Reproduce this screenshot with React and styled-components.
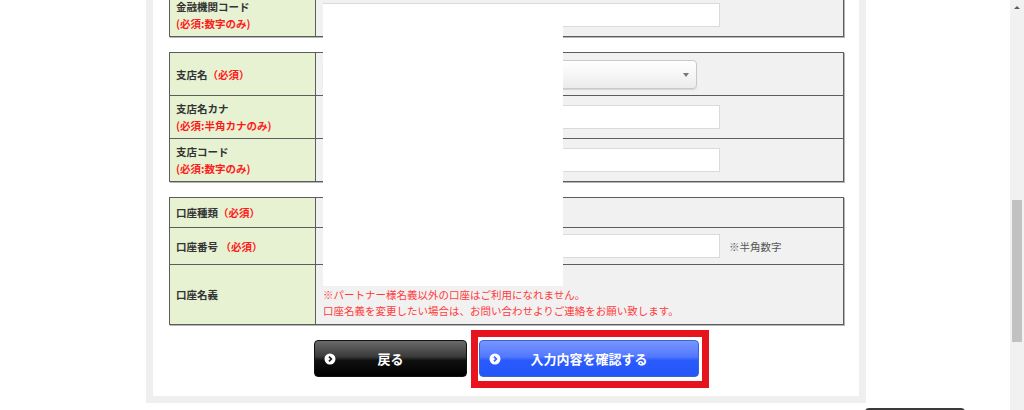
import React from "react";
import styled, { createGlobalStyle } from "styled-components";

const GlobalStyle = createGlobalStyle`
  html, body {
    margin: 0;
    padding: 0;
    background: #fff;
  }
  body {
    font-family: "Noto Sans CJK JP", "Noto Sans", sans-serif;
    color: #333;
  }
`;

const Page = styled.div`
  position: relative;
  display: flex;
  height: 410px;
  overflow: hidden;
`;

const Main = styled.div`
  flex: 1;
  min-width: 0;
`;

const Frame = styled.div`
  width: 720px;
  box-sizing: border-box;
  margin: -14px 0 0 146px;
  border: 7px solid #efefef;
  padding: 0 15px 19px 16px;
  background: #fff;
`;

const Table = styled.table`
  width: 100%;
  border-collapse: collapse;
  border: 1px solid #5c5c5c;
  box-shadow: 1px 1px 0 #b5b5b5;
  margin-top: ${(p) => (p.$first ? "0" : "15px")};
`;

const Row = styled.tr`
  height: ${(p) => p.$h}px;
`;

const Label = styled.th`
  width: 146px;
  box-sizing: border-box;
  padding: 0 6px;
  background: #e7f2d3;
  border: 1px solid #5c5c5c;
  text-align: left;
  vertical-align: middle;
  font-size: 10.5px;
  font-weight: bold;
  line-height: 17px;
  color: #333;
`;

const Req = styled.span`
  color: #ff1a1a;
  font-weight: bold;
`;

const ReqLine = styled.div`
  color: #ff1a1a;
`;

const Value = styled.td`
  padding: 0 7px;
  background: #f1f1f1;
  border: 1px solid #5c5c5c;
  vertical-align: middle;
  font-size: 10.5px;
`;

const Field = styled.div`
  display: flex;
  align-items: center;
  gap: 9px;
`;

const TextInput = styled.input`
  width: 397px;
  height: 24px;
  box-sizing: border-box;
  border: 1px solid #dadada;
  background: #fff;
  padding: 0 4px;
  font-size: 11px;
`;

const SelectBox = styled.div`
  position: relative;
  width: 374px;
  height: 29px;
  box-sizing: border-box;
  border: 1px solid #c9c9c9;
  border-radius: 4px;
  background: linear-gradient(#ffffff 0%, #f7f7f7 45%, #ebebeb 100%);
  box-shadow: 0 1px 1px rgba(0, 0, 0, 0.12);

  &::after {
    content: "";
    position: absolute;
    right: 7px;
    top: 12px;
    border-left: 3px solid transparent;
    border-right: 3px solid transparent;
    border-top: 4px solid #777;
  }
`;

const Hint = styled.span`
  color: #555;
  font-size: 10.5px;
`;

const NameLine = styled.div`
  height: 16px;
`;

const Note = styled.div`
  color: #ff3b3b;
  font-size: 10.5px;
  line-height: 16px;
`;

const Buttons = styled.div`
  display: flex;
  justify-content: center;
  gap: 12px;
  margin-top: 15px;
`;

const Button = styled.button`
  position: relative;
  width: ${(p) => p.$w}px;
  height: 37px;
  box-sizing: border-box;
  border-radius: 4px;
  border: 1px solid ${(p) => (p.$blue ? "#3b63d9" : "#111")};
  background: ${(p) =>
    p.$blue
      ? "linear-gradient(#7896ff 0%, #5278ff 45%, #2a5bff 55%, #2456f5 100%)"
      : "linear-gradient(#6a6a6a 0%, #3a3a3a 45%, #111 55%, #000 100%)"};
  color: #fff;
  font-family: "Noto Sans CJK JP", "Noto Sans", sans-serif;
  font-size: 13px;
  font-weight: bold;
  padding: 0;
  cursor: pointer;

  svg {
    position: absolute;
    left: 9px;
    top: 12px;
  }
`;

const Highlight = styled.div`
  position: relative;

  &::after {
    content: "";
    position: absolute;
    left: -8px;
    right: -10px;
    top: -10px;
    bottom: -11px;
    border: 7px solid #e8141d;
    pointer-events: none;
  }
`;

const PageTop = styled.div`
  width: 100px;
  height: 10px;
  margin: 5px 0 0 865px;
  background: #3a3a3a;
  border-radius: 4px 4px 0 0;
`;

const Redaction = styled.div`
  position: absolute;
  left: 323px;
  top: 4px;
  width: 240px;
  height: 282px;
  background: #fff;
`;

const Scrollbar = styled.div`
  width: 14px;
  background: #f1f1f1;
  display: flex;
  flex-direction: column;
  align-items: center;
`;

const ArrowUp = styled.div`
  margin-top: 6px;
  border-left: 3px solid transparent;
  border-right: 3px solid transparent;
  border-bottom: 3px solid #5a5a5a;
`;

const Thumb = styled.div`
  width: 10px;
  height: 142px;
  margin-top: 191px;
  background: #c1c1c1;
`;

const CircleArrow = ({ color }) => (
  <svg width="12" height="12" viewBox="0 0 12 12">
    <circle cx="6" cy="6" r="5.5" fill="#fff" />
    <path d="M5 3.6 L7.3 6 L5 8.4" fill="none" stroke={color} strokeWidth="1.8" />
  </svg>
);

export default function App() {
  return (
    <>
      <GlobalStyle />
      <Page>
        <Main>
          <Frame>
            <Table $first>
              <tbody>
                <Row $h={43}>
                  <Label>
                    金融機関コード
                    <ReqLine>(必須:数字のみ)</ReqLine>
                  </Label>
                  <Value>
                    <TextInput />
                  </Value>
                </Row>
              </tbody>
            </Table>

            <Table>
              <tbody>
                <Row $h={43}>
                  <Label>
                    支店名<Req>（必須）</Req>
                  </Label>
                  <Value>
                    <SelectBox />
                  </Value>
                </Row>
                <Row $h={43}>
                  <Label>
                    支店名カナ
                    <ReqLine>(必須:半角カナのみ)</ReqLine>
                  </Label>
                  <Value>
                    <TextInput />
                  </Value>
                </Row>
                <Row $h={43}>
                  <Label>
                    支店コード
                    <ReqLine>(必須:数字のみ)</ReqLine>
                  </Label>
                  <Value>
                    <TextInput />
                  </Value>
                </Row>
              </tbody>
            </Table>

            <Table>
              <tbody>
                <Row $h={30}>
                  <Label>
                    口座種類<Req>（必須）</Req>
                  </Label>
                  <Value />
                </Row>
                <Row $h={37}>
                  <Label>
                    口座番号 <Req>（必須）</Req>
                  </Label>
                  <Value>
                    <Field>
                      <TextInput />
                      <Hint>※半角数字</Hint>
                    </Field>
                  </Value>
                </Row>
                <Row $h={60}>
                  <Label>口座名義</Label>
                  <Value>
                    <NameLine />
                    <Note>※パートナー様名義以外の口座はご利用になれません。</Note>
                    <Note>口座名義を変更したい場合は、お問い合わせよりご連絡をお願い致します。</Note>
                  </Value>
                </Row>
              </tbody>
            </Table>

            <Buttons>
              <Button $w={153}>
                <CircleArrow color="#222" />
                戻る
              </Button>
              <Highlight>
                <Button $w={220} $blue>
                  <CircleArrow color="#3a66ff" />
                  入力内容を確認する
                </Button>
              </Highlight>
            </Buttons>
          </Frame>
          <PageTop />
        </Main>
        <Scrollbar>
          <ArrowUp />
          <Thumb />
        </Scrollbar>
        <Redaction />
      </Page>
    </>
  );
}
